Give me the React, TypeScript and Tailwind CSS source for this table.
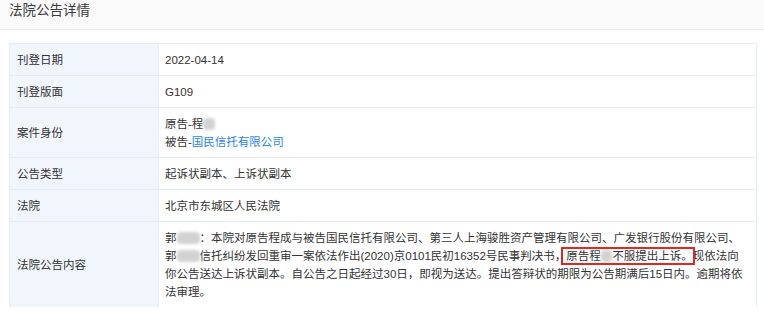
import React from "react";

const FONT = {
  fontFamily: '"Liberation Sans", Arial, "Noto Sans CJK SC", sans-serif',
};

function Blob({ w = "w-[11.5px]" }: { w?: string }) {
  return (
    <span
      className={`inline-block ${w} h-[12px] align-[-2px] rounded-[4px] bg-[#d2d2d2] blur-[1.5px]`}
    ></span>
  );
}

function Row({
  label,
  children,
  last,
}: {
  label: string;
  children: React.ReactNode;
  last?: boolean;
}) {
  return (
    <div
      className={`grid grid-cols-[149px_1fr] ${
        last ? "" : "border-b border-[#e4ecf5]"
      }`}
    >
      <div className="flex items-center bg-[#f1f6fc] border-r border-[#e4ecf5] pl-[7px] pt-[7px] pb-[6px] text-[#333]">
        {label}
      </div>
      <div className="pl-[6px] pr-[7px] pt-[7px] pb-[6px] text-[#333]">
        {children}
      </div>
    </div>
  );
}

export default function App() {
  return (
    <div
      className="w-[764px] h-[311px] bg-white overflow-hidden text-[11.5px] leading-[18px]"
      style={FONT}
    >
      <div className="h-[30px] bg-[#fafafa] border-b border-[#ececec] pl-[9px] pt-[3px] text-[13.5px] leading-[16px] text-[#3a3a3a]">
        法院公告详情
      </div>
      <div className="mt-[13px] ml-[9px] w-[748px] border border-[#e4ecf5] border-b-0">
        <Row label="刊登日期">2022-04-14</Row>
        <Row label="刊登版面">G109</Row>
        <Row label="案件身份">
          <div>
            原告-程<Blob />
          </div>
          <div>
            被告-<span className="text-[#1d86f0]">国民信托有限公司</span>
          </div>
        </Row>
        <Row label="公告类型">起诉状副本、上诉状副本</Row>
        <Row label="法院">北京市东城区人民法院</Row>
        <Row label="法院公告内容" last>
          <div className="whitespace-nowrap">
            <div>
              郭<Blob w="w-[23px]" />
              ：本院对原告程成与被告国民信托有限公司、第三人上海骏胜资产管理有限公司、广发银行股份有限公司、
            </div>
            <div>
              郭<Blob w="w-[23px]" />
              信托纠纷发回重审一案依法作出(2020)京0101民初16352号民事判决书，
              <span className="relative">
                原告程<Blob />不服提出上诉。
                <span className="absolute left-[-5px] right-[-2px] top-[-3px] bottom-[-3px] border-2 border-[#e3261f]"></span>
              </span>
              现依法向
            </div>
            <div>
              你公告送达上诉状副本。自公告之日起经过30日，即视为送达。提出答辩状的期限为公告期满后15日内。逾期将依
            </div>
            <div>法审理。</div>
          </div>
        </Row>
      </div>
    </div>
  );
}
